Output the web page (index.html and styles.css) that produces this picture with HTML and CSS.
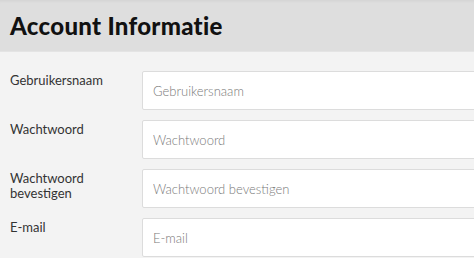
FILE: index.html
```html
<!DOCTYPE html>
<html lang="nl">
<head>
    <meta charset="UTF-8">
    <meta name="viewport" content="width=device-width, initial-scale=1.0">
    <title>Account Informatie</title>
    <link rel="stylesheet" href="styles.css">
</head>
<body>
    <div class="header">
        <h1>Account Informatie</h1>
    </div>
    <form class="account-form">
        <div class="row">
            <label for="username">Gebruikersnaam</label>
            <input type="text" id="username" placeholder="Gebruikersnaam">
        </div>
        <div class="row">
            <label for="password">Wachtwoord</label>
            <input type="password" id="password" placeholder="Wachtwoord">
        </div>
        <div class="row">
            <label for="password2">Wachtwoord bevestigen</label>
            <input type="password" id="password2" placeholder="Wachtwoord bevestigen">
        </div>
        <div class="row">
            <label for="email">E-mail</label>
            <input type="email" id="email" placeholder="E-mail">
        </div>
    </form>
</body>
</html>
```

FILE: styles.css
```css
* {
    box-sizing: border-box;
    margin: 0;
    padding: 0;
}
body {
    font-family: Lato, 'Liberation Sans', sans-serif;
    color: #222;
    background: #f3f3f3;
    overflow: hidden;
}
.header {
    height: 52px;
    display: flex;
    align-items: center;
    padding-left: 10px;
    background: #dedede;
    box-shadow: inset 0 3px 3px -2px rgba(0, 0, 0, 0.06);
    border-bottom: 1px solid #e4e4e4;
}
.header h1 {
    font-size: 24px;
    font-weight: 900;
    color: #111;
    letter-spacing: 0.3px;
}
.account-form {
    padding: 19px 0 0 10px;
    display: flex;
    flex-direction: column;
    gap: 10px;
}
.row {
    display: grid;
    grid-template-columns: 132px 380px;
    align-items: start;
}
.row label {
    font-size: 13px;
    line-height: 15px;
    padding-top: 2px;
    padding-right: 20px;
    color: #333;
}
.row input {
    height: 39px;
    padding: 0 10px;
    font-family: inherit;
    font-size: 13px;
    font-weight: 300;
    color: #333;
    background: #fff;
    border: 1px solid #dcdcdc;
    border-radius: 2px;
    outline: none;
}
.row input::placeholder {
    color: #7a7a7a;
}
```
